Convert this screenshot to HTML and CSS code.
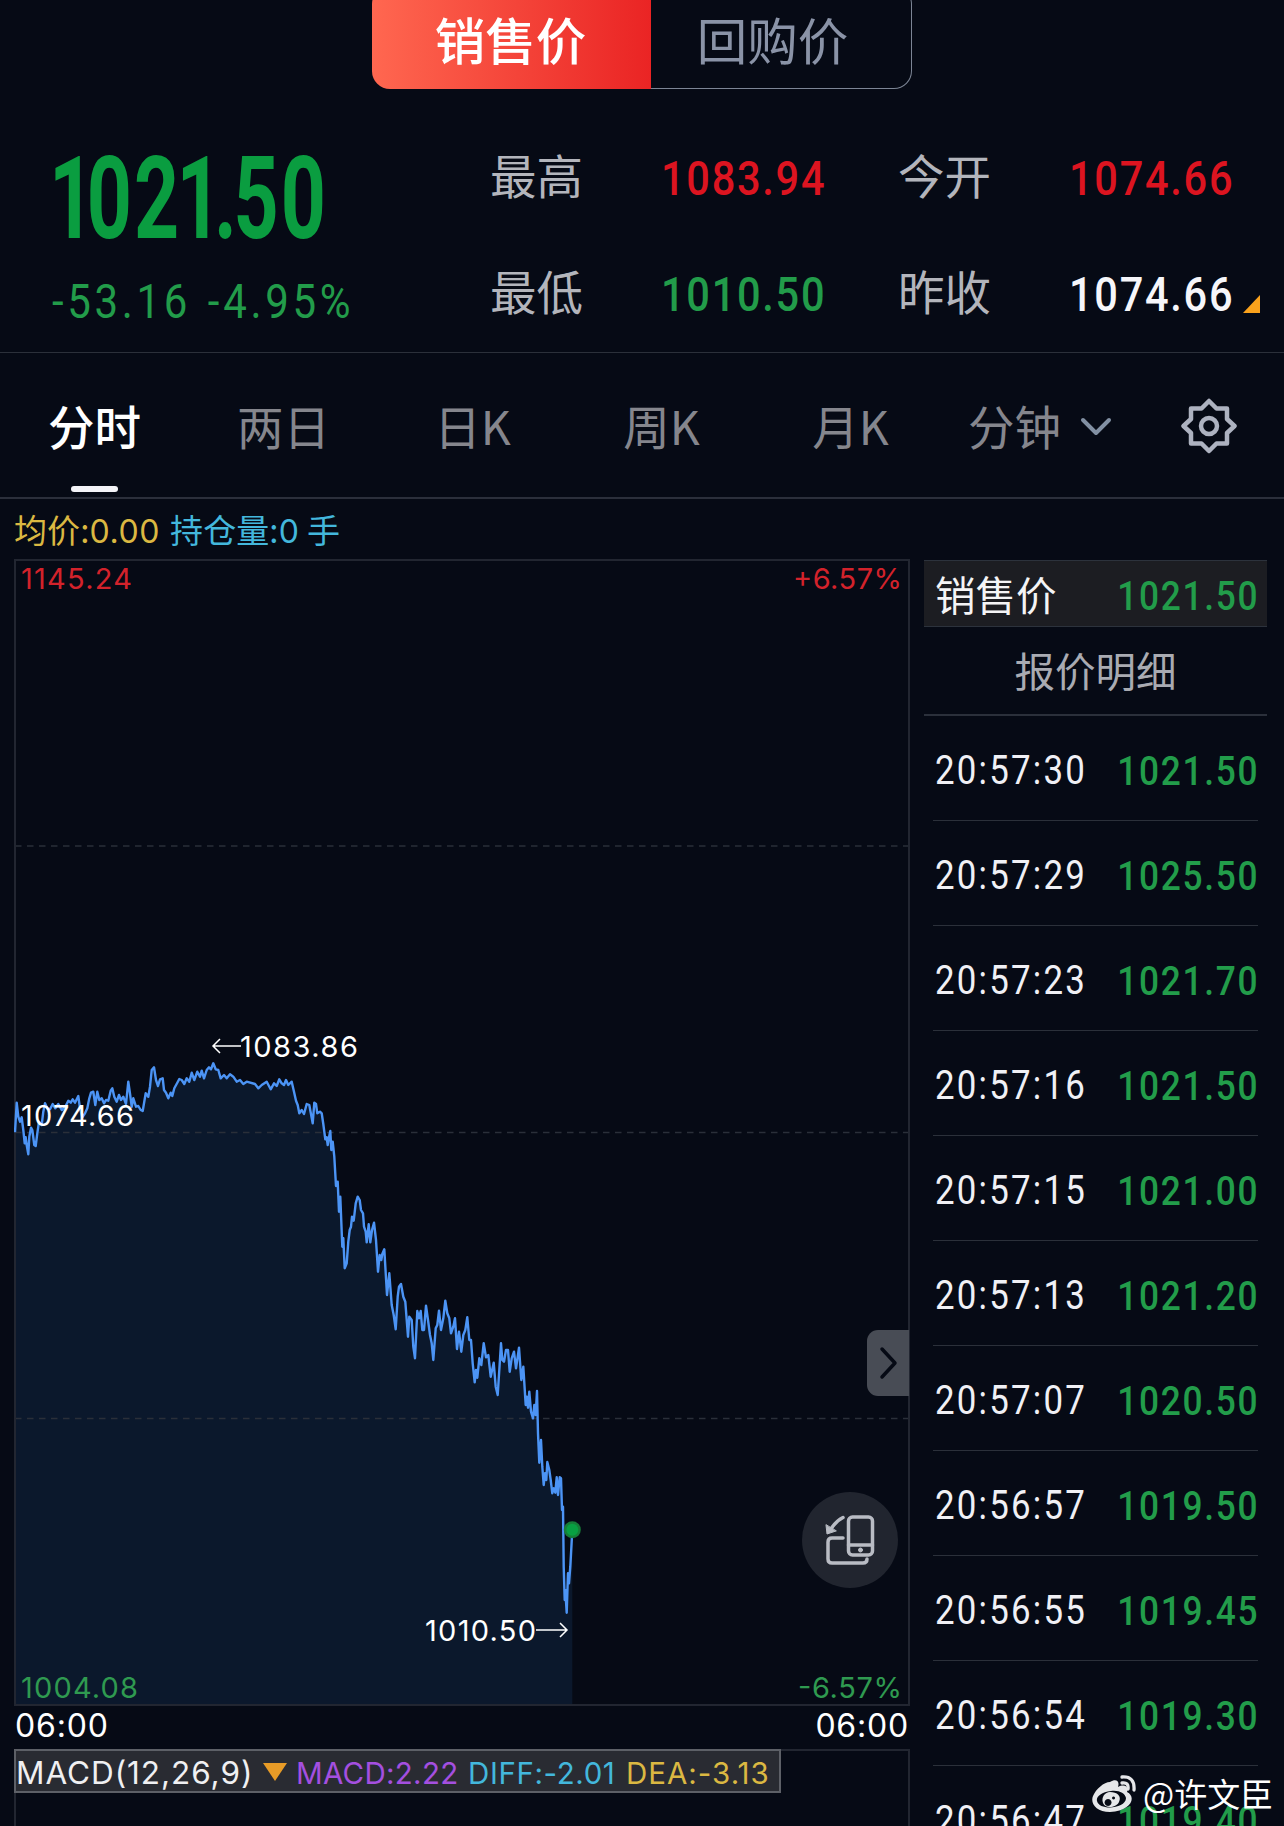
FILE: index.html
```html
<!DOCTYPE html>
<html lang="zh-CN">
<head>
  <meta charset="UTF-8">
  <meta name="viewport" content="width=device-width, initial-scale=1.0">
  <title>销售价</title>
  <link rel="stylesheet" href="styles.css">
</head>
<body>
<div class="page">
  <div class="switch">
    <div class="switch-item active">销售价</div>
    <div class="switch-item">回购价</div>
  </div>

  <div class="quote">
    <div class="quote-main">
      <div class="last"><span class="one">1</span>0<span class="two">2</span><span class="one">1</span><span class="dot">.</span>50</div>
      <div class="change num">-53.16 -4.95%</div>
    </div>
    <div class="stats">
      <span class="label">最高</span><span class="num red">1083.94</span>
      <span class="label">今开</span><span class="num red">1074.66</span>
      <span class="label">最低</span><span class="num green">1010.50</span>
      <span class="label">昨收</span><span class="num white">1074.66</span>
    </div>
    <i class="corner"></i>
  </div>

  <div class="tabs">
    <div class="tab active">分时</div>
    <div class="tab">两日</div>
    <div class="tab">日K</div>
    <div class="tab">周K</div>
    <div class="tab">月K</div>
    <div class="tab minutes">分钟
      <svg width="32" height="20" viewBox="0 0 32 20"><path d="M3 3l13 13L29 3"/></svg>
    </div>
    <svg class="gear" width="56" height="56" viewBox="0 0 56 56">
      <path d="M28 3l7.500 7.500H46v10.500l7.500 7-7.500 7V45.500H35.500L28 53l-7.500-7.500H10V35l-7.500-7 7.500-7V10.500h10.500z"/>
      <circle cx="28" cy="28" r="8"/>
    </svg>
  </div>

  <div class="content">
    <div class="left">
      <div class="legend"><span class="yellow">均价:<b>0.00</b></span><span class="cyan">持仓量:<b>0</b> 手</span></div>
      <div class="chart">
        <svg width="896" height="1147" viewBox="14 559 896 1147">
          <path id="area" class="area"/>
          <path class="grid" d="M15 846H909M15 1132.500H909M15 1418.500H909"/>
          <rect class="frame" x="15" y="560" width="894" height="1145"/>
          <path id="line" class="line"/>
          <circle class="halo" cx="572.300" cy="1529.700" r="8.500"/>
          <circle class="point" cx="572.300" cy="1529.700" r="6"/>
          <path class="arrow" d="M241 1046H213M220 1039l-7 7 7 7M536 1630h31M560 1623l7 7-7 7"/>
          <text x="21" y="589" textLength="111" class="red">1145.24</text>
          <text x="793" y="589" textLength="109" class="red">+6.57%</text>
          <text x="21" y="1698" textLength="117" class="green">1004.08</text>
          <text x="798" y="1698" textLength="104" class="green">-6.57%</text>
          <text x="21" y="1126" textLength="113" class="white">1074.66</text>
          <text x="240" y="1056.500" textLength="118" class="white">1083.86</text>
          <text x="425" y="1640.500" textLength="111" class="white">1010.50</text>
        </svg>
        <div class="expand"><svg width="20" height="34" viewBox="0 0 20 34"><path d="M3 3l13 14L3 31"/></svg></div>
        <div class="rotate">
          <svg width="50" height="50" viewBox="0 0 50 50">
            <path d="M18 23H7q-4 0-4 4v17q0 4 4 4h31q4 0 4-4"/>
            <rect x="23.500" y="2" width="24" height="38" rx="4"/>
            <path d="M23.500 30h24M18 2.500Q11 6 6 14"/>
            <path class="solid" d="M1 10l1 9 9-3z"/>
            <circle class="solid" cx="35.500" cy="35" r="2"/>
          </svg>
        </div>
      </div>
      <div class="axis"><span>06:00</span><span>06:00</span></div>
      <div class="macd">
        <div class="macd-bar">
          <span class="macd-name">MACD(12,26,9)</span>
          <i class="caret"></i>
          <span class="purple">MACD:2.22</span>
          <span class="cyan">DIFF:-2.01</span>
          <span class="yellow">DEA:-3.13</span>
        </div>
      </div>
    </div>

    <div class="right">
      <div class="now"><span>销售价</span><span class="price">1021.50</span></div>
      <div class="detail">报价明细</div>
      <div class="row"><span class="time">20:57:30</span><span class="price">1021.50</span></div>
      <div class="row"><span class="time">20:57:29</span><span class="price">1025.50</span></div>
      <div class="row"><span class="time">20:57:23</span><span class="price">1021.70</span></div>
      <div class="row"><span class="time">20:57:16</span><span class="price">1021.50</span></div>
      <div class="row"><span class="time">20:57:15</span><span class="price">1021.00</span></div>
      <div class="row"><span class="time">20:57:13</span><span class="price">1021.20</span></div>
      <div class="row"><span class="time">20:57:07</span><span class="price">1020.50</span></div>
      <div class="row"><span class="time">20:56:57</span><span class="price">1019.50</span></div>
      <div class="row"><span class="time">20:56:55</span><span class="price">1019.45</span></div>
      <div class="row"><span class="time">20:56:54</span><span class="price">1019.30</span></div>
      <div class="row"><span class="time">20:56:47</span><span class="price">1019.40</span></div>
    </div>
  </div>

  <div class="watermark">
    <svg width="46" height="40" viewBox="0 0 46 40">
      <path fill="#e6e7ea" fill-rule="evenodd" d="M19 8C25 4 29 7 27 13C33 10 38 12 36 18C46 23 40 37 19 38C5 38-1 29 2 22C5 15 13 8 19 8zM20 17C10 18 5 23 6 27C8 37 35 35 35 24C34 19 28 16 20 17z"/>
      <path fill="#e6e7ea" fill-rule="evenodd" d="M19 18C26 18 31 22 28 28C25 34 14 35 12 29C10 23 14 18 19 18zM17 25a3.500 3.500 0 1 0 .1 0zM22.500 22.500a1.500 1.500 0 1 0 .1 0z"/>
      <path fill="none" stroke="#e6e7ea" stroke-width="3.300" stroke-linecap="round" d="M31 3Q44 2 43 16M31 9Q38 8 37 15"/>
    </svg>
    <span>@许文臣</span>
  </div>
</div>
<script src="chart.js"></script>
</body>
</html>
```
FILE: styles.css
```css
body {
  margin: 0;
  background: #060a15;
  color: #fff;
  font-family: "Noto Sans CJK SC", sans-serif;
}
.page {
  position: relative;
  width: 1284px;
  height: 1826px;
  overflow: hidden;
}
.red { color: #dc1420; fill: #d3222b; }
.green { color: #229c4a; fill: #2f9a50; }
.white { color: #f6f6fa; fill: #fff; }
.yellow { color: #dbb842; }
.cyan { color: #43b7dc; }
.purple { color: #a44fe0; }

/* sell / buy-back switch */
.switch {
  display: flex;
  width: 540px;
  height: 89px;
  margin: 0 auto;
  box-sizing: border-box;
}
.switch-item {
  width: 261px;
  height: 103px;
  margin-top: -14px;
  box-sizing: border-box;
  padding: 14px 17px 0 0;
  border: 1px solid #7c8595;
  border-left: 0;
  border-radius: 0 18px 18px 0;
  text-align: center;
  font-size: 50.5px;
  line-height: 74px;
  color: #8a93a7;
}
.switch-item.active {
  width: 279px;
  border: 0;
  border-radius: 18px 0 0 18px;
  padding: 15px 2px 0 0;
  background: linear-gradient(90deg, #ff6750, #ea2424);
  color: #fff;
  font-weight: 500;
}

/* quote header */
.quote {
  position: relative;
  display: flex;
  height: 263px;
  border-bottom: 1px solid #2b303a;
}
.quote-main {
  flex: none;
  width: 387px;
  padding: 52px 0 0 52px;
}
.last {
  height: 116px;
  line-height: 116px;
  margin-left: -3px;
  font-family: Roboto, sans-serif;
  font-weight: 700;
  font-size: 115px;
  letter-spacing: 3px;
  white-space: nowrap;
  color: #0a9d40;
  transform: scaleX(.685);
  transform-origin: left;
}
.last .one { letter-spacing: -11px; }
.last .two { letter-spacing: -4px; }
.last .dot { letter-spacing: -5px; }
.num {
  font-family: Roboto, sans-serif;
  font-weight: 500;
  font-size: 48px;
  line-height: 56px;
  letter-spacing: 2px;
  white-space: nowrap;
  transform: scaleX(.865);
  transform-origin: left;
}
.change {
  margin-top: 17px;
  font-weight: 400;
  letter-spacing: 4.2px;
  word-spacing: 3px;
  color: #229c4a;
  transform: scaleX(.875);
}
.stats {
  display: grid;
  grid-template-columns: 171px 237px 171px 200px;
  grid-template-rows: 116px 116px;
  align-items: center;
  height: 232px;
  padding: 32px 0 0 51px;
}
.label {
  font-size: 46.5px;
  line-height: 60px;
  margin-top: -10px;
  color: #b3b5bc;
}
.corner {
  position: absolute;
  right: 24px;
  bottom: 39px;
  border-left: 17px solid transparent;
  border-bottom: 18px solid #faa21c;
}

/* period tabs */
.tabs {
  display: flex;
  height: 144px;
  border-bottom: 2px solid #2b2f3b;
}
.tab {
  width: 189px;
  height: 140px;
  box-sizing: border-box;
  padding-top: 37px;
  text-align: center;
  font-size: 46.5px;
  line-height: 70px;
  color: #85868d;
}
.tab.active {
  color: #fff;
  font-weight: 500;
}
.tab.active::after {
  content: "";
  display: block;
  width: 47px;
  height: 6px;
  margin: 26px auto 0;
  border-radius: 3px;
  background: #f4f4f8;
}
.tab.minutes {
  width: 190px;
  display: flex;
  padding-left: 23px;
}
.minutes svg {
  margin: 27px 0 0 19px;
}
.minutes path {
  fill: none;
  stroke: #8290a3;
  stroke-width: 4;
  stroke-linecap: round;
  stroke-linejoin: round;
}
.gear {
  margin: 45px 0 0 46px;
  fill: none;
  stroke: #adb2c0;
  stroke-width: 4.5;
  stroke-linejoin: round;
}

/* chart column */
.content { display: flex; }
.left {
  width: 896px;
  padding-left: 14px;
  font-family: Inter, "Noto Sans CJK SC", sans-serif;
}
.legend {
  display: flex;
  gap: 10px;
  height: 60px;
  line-height: 60px;
  font-family: "Noto Sans CJK SC", sans-serif;
  font-size: 33px;
  letter-spacing: .1px;
}
.legend b {
  font-family: Inter, sans-serif;
  font-weight: 400;
  font-size: 32px;
  letter-spacing: .6px;
}
.chart {
  position: relative;
  height: 1147px;
}
.chart > svg { display: block; }
.chart text {
  font-size: 29px;
}
.frame {
  fill: none;
  stroke: #222631;
  stroke-width: 2;
}
.grid {
  fill: none;
  stroke: #2a2f39;
  stroke-width: 1.5;
  stroke-dasharray: 6.5 5.5;
}
.area { fill: #0b182c; }
.line {
  fill: none;
  stroke: #4c94f5;
  stroke-width: 2.4;
  stroke-linejoin: round;
}
.halo { fill: #167d38; }
.point { fill: #08a042; }
.arrow {
  fill: none;
  stroke: #fff;
  stroke-width: 1.5;
}
.expand {
  position: absolute;
  right: 1px;
  top: 771px;
  width: 42px;
  height: 66px;
  box-sizing: border-box;
  padding: 16px 0 0 12px;
  border-radius: 11px 0 0 11px;
  background: #484c55;
}
.expand path {
  fill: none;
  stroke: #060a15;
  stroke-width: 3.5;
  stroke-linecap: round;
  stroke-linejoin: round;
}
.rotate {
  position: absolute;
  right: 12px;
  top: 933px;
  width: 96px;
  height: 96px;
  display: flex;
  align-items: center;
  justify-content: center;
  border-radius: 50%;
  background: #21252f;
}
.rotate svg {
  fill: none;
  stroke: #b9bcc4;
  stroke-width: 3.5;
  stroke-linecap: round;
}
.rotate .solid {
  fill: #b9bcc4;
  stroke-width: 1;
}
.axis {
  display: flex;
  justify-content: space-between;
  height: 43px;
  line-height: 39px;
  font-size: 32px;
  letter-spacing: .8px;
  padding: 0 1px 0 1px;
}
.macd {
  height: 80px;
  border: 1px solid #222631;
  border-width: 2px 2px 0;
}
.macd-bar {
  display: flex;
  align-items: center;
  width: 767px;
  height: 44px;
  margin: -2px 0 0 -2px;
  box-sizing: border-box;
  padding-top: 3px;
  border: 2px solid #5d6067;
  background: #292b32;
  font-size: 29.5px;
  letter-spacing: .8px;
  white-space: nowrap;
}
.macd-name {
  width: 247px;
  font-size: 31.5px;
  letter-spacing: .95px;
  color: #f0f0f2;
}
.macd-bar .purple {
  width: 172px;
  letter-spacing: .3px;
}
.macd-bar .cyan {
  width: 158px;
  letter-spacing: .6px;
}
.macd-bar .yellow { letter-spacing: 1px; }
.caret {
  margin: -2px 9px 0 0;
  border: 12px solid transparent;
  border-top: 18px solid #e79b27;
  border-bottom: 0;
}

/* price list */
.right {
  width: 343px;
  margin: 61px 0 0 14px;
}
.now {
  display: flex;
  justify-content: space-between;
  height: 65px;
  padding: 0 10px 0 11px;
  border: 1px solid #2c323c;
  border-width: 1px 0;
  background: #1c1d22;
  font-size: 40.5px;
  line-height: 66px;
  color: #f4f4f6;
}
.detail {
  height: 87px;
  border-bottom: 2px solid #2b303b;
  text-align: center;
  font-size: 40.5px;
  line-height: 86px;
  color: #a9abb2;
}
.row {
  display: flex;
  justify-content: space-between;
  height: 104px;
  margin: 0 9px;
  padding: 0 1px 0 2px;
  border-bottom: 1px solid #2b303a;
}
.row .time {
  width: 150px;
  white-space: nowrap;
  font-family: Roboto, sans-serif;
  font-weight: 400;
  font-size: 41px;
  line-height: 109px;
  letter-spacing: 2.6px;
  color: #f0f0f5;
  transform: scaleX(.85);
  transform-origin: left;
}
.price {
  font-family: Roboto, sans-serif;
  font-weight: 500;
  font-size: 41px;
  line-height: 111px;
  letter-spacing: 2px;
  margin-right: -2px;
  color: #229c4a;
  transform: scaleX(.86);
  transform-origin: right;
}
.now .price { line-height: 71px; }

.watermark {
  position: absolute;
  left: 1091px;
  top: 1774px;
  display: flex;
  align-items: center;
  gap: 6px;
  font-size: 33px;
  line-height: 42px;
  white-space: nowrap;
}
.watermark span { margin-top: -2px; }
```
FILE: chart.js
```js
// price series, three chunks, each with its own origin; units are 1/3 px
const chunks = [
  { x: 0, y: 1030, pts: '45,307 50,218 55,260 60,275 65,262 70,300 74,340 77,322 80,345 85,373 88,320 93,293 97,300 103,345 107,348 112,310 117,275 125,285 130,245 135,220 142,235 150,238 158,222 166,235 175,222 185,240 195,232 205,212 212,218 218,208 225,218 235,198 240,235 247,262 255,250 262,235 268,205 273,188 280,185 286,225 292,185 298,210 305,205 312,220 318,210 325,212 332,182 337,175 343,200 350,215 357,195 363,210 370,200 378,222 385,155 390,190 395,230 400,205 408,230 415,228 422,240 428,243 437,190 445,200 450,170 455,120 462,112 468,150 474,168 480,148 488,145 492,180 498,188 505,205 512,188 517,198 523,175 532,158 538,147 545,150 553,162 560,145 568,155 575,128 583,150 592,125 600,140 605,122 612,145 620,120 627,112 633,118 640,100 647,118 655,120 662,145 672,135 680,145 690,133 700,140 710,155 720,150 730,162 740,155 765,162 775,175 785,165 800,155 812,178 822,160 830,168 838,148 845,160 852,165 858,150 865,165 875,155 882,185 888,212 893,225 898,250 905,240 912,252 920,222 928,225 938,280 943,218 948,222 952,250 960,245' },
  { x: 280, y: 1050, pts: '125,190 130,222 136,268 140,262 143,285 147,262 151,243 154,300 158,275 163,320 168,408 173,395 177,485 181,440 187,590 190,565 194,655 200,640 205,575 209,540 213,530 216,500 221,512 227,460 233,440 239,450 243,480 249,490 252,530 257,545 260,577 266,523 271,577 276,540 282,518 288,570 294,665 299,615 304,630 307,612 313,598 321,735 328,670 335,765 341,795 347,838 353,740 357,710 363,702 370,740 376,755 384,860 388,800 395,810 400,890 405,925' },
  { x: 380, y: 1280, pts: '112,93 117,115 122,93 127,150 132,150 138,77 144,120 150,165 155,190 160,240 167,145 172,135 177,92 183,150 190,115 196,62 202,100 208,115 213,160 220,140 225,115 231,207 237,155 244,215 250,165 256,150 262,112 268,180 273,180 278,250 284,307 288,270 292,293 298,235 304,255 311,190 318,232 325,225 332,290 341,248 347,320 353,345 363,190 367,240 372,245 378,210 384,210 389,275 395,235 402,215 408,265 417,203 424,300 430,260 437,375 440,350 444,383 448,335 453,395 459,415 463,375 467,405 471,333 474,460 478,548 483,480 487,560 491,615 495,580 499,600 502,546 508,570 512,600 517,640 521,625 526,638 530,592 534,645 539,592 543,595 546,690 549,680 551,860 554,960 556,930 560,998 564,880 567,910 571,860 577,750' }
];

const points = [];
chunks.forEach(c => {
  c.pts.split(' ').forEach(p => {
    const [x, y] = p.split(',').map(Number);
    points.push((c.x + x / 3).toFixed(1) + ' ' + (c.y + y / 3).toFixed(1));
  });
});

const d = 'M' + points.join('L');
document.getElementById('line').setAttribute('d', d);
document.getElementById('area').setAttribute('d', d + 'V1705H15Z');
```
